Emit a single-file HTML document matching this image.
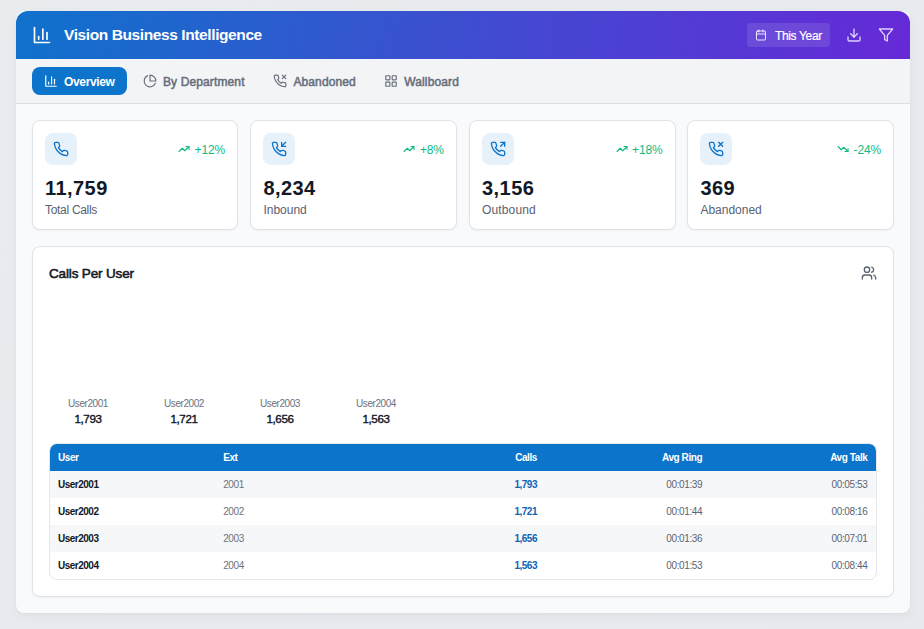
<!DOCTYPE html>
<html lang="en">
<head>
<meta charset="utf-8">
<title>Vision Business Intelligence</title>
<style>
*{box-sizing:border-box;margin:0;padding:0}
html,body{width:924px;height:629px;overflow:hidden}
body{font-family:"Liberation Sans",sans-serif;background:linear-gradient(135deg,#e8ecef 0%,#e6eaee 100%);color:#111827;position:relative}
svg{display:block;fill:none;stroke:currentColor;stroke-width:2;stroke-linecap:round;stroke-linejoin:round}
.app{position:absolute;left:16px;top:11px;width:894px;height:602px;background:#f9fafb;border-radius:8px;box-shadow:0 4px 12px rgba(0,0,0,.035),0 1px 3px rgba(0,0,0,.03)}
.hdr{height:48px;border-radius:12px 12px 0 0;background:linear-gradient(100deg,#0f72cc 0%,#3b50d0 46%,#6629d7 100%);display:flex;align-items:center;padding:0 16px;color:#fff}
.hdr .logo{width:20px;height:20px;margin-top:-1px}
.hdr h1{font-size:15.5px;font-weight:bold;margin-left:12px;letter-spacing:-.4px;white-space:nowrap}
.hdr .sp{flex:1}
.yr{display:flex;align-items:center;width:83px;height:24px;padding:1px 0 0 8px;border-radius:4px;background:rgba(255,255,255,.11);font-size:12px;letter-spacing:-.35px;color:#fff;-webkit-text-stroke:.2px #fff;white-space:nowrap}
.yr svg{width:12px;height:12px;margin-right:8px;margin-top:-2px;color:rgba(255,255,255,.85)}
.ib{width:16px;height:16px;margin-left:16px;color:rgba(255,255,255,.78)}
.tabs{height:45px;background:#f3f4f6;border-bottom:1px solid #dcdfe4;display:flex;align-items:flex-start;padding:8px 16px 0}
.tab{height:28px;display:flex;align-items:center;padding:2px 0 0 12px;border-radius:8px;font-size:12px;letter-spacing:.12px;color:#666e7b;-webkit-text-stroke:.5px currentColor;margin-right:4px;white-space:nowrap}
.tab svg{margin-top:-2px}
.t1{width:95px}.t2{width:126.4px}.t3{width:106.9px}.t4{width:100px}
.tab svg{width:14px;height:14px;margin-right:6px}
.tab.on{background:#0c74ca;color:#fff;font-weight:bold;letter-spacing:-.35px;-webkit-text-stroke:0}
.cards{position:absolute;left:16px;top:109px;width:862px;height:110px}
.card{position:absolute;top:0;width:206.5px;height:110px;background:#fff;border:1px solid #e0e3e7;border-radius:8px;padding:12px;box-shadow:0 1px 2px rgba(0,0,0,.05);}
.c1{left:0;width:206px}.c2{left:218.4px}.c3{left:437px}.c4{left:655.4px;width:206.6px}
.ic{width:32px;height:32px;border-radius:8px;background:#e7f1fa;color:#0c74ca;display:flex;align-items:center;justify-content:center}
.ic svg{width:16px;height:16px}
.tr{position:absolute;right:12px;top:21px;height:16px;display:flex;align-items:center;font-size:12px;letter-spacing:-.15px;color:#10b981;white-space:nowrap}
.tr svg{width:12px;height:12px;margin-right:4.5px;margin-top:-2px;stroke-width:2.2}
.num{position:absolute;left:12px;top:55px;font-size:20px;line-height:24px;font-weight:bold;letter-spacing:.45px;color:#111827;white-space:nowrap}
.lbl{position:absolute;left:12px;top:81px;font-size:12px;line-height:16px;color:#596170;white-space:nowrap}
.panel{position:absolute;left:16px;top:235px;width:862px;height:351px;background:#fff;border:1px solid #e0e3e7;border-radius:8px;box-shadow:0 1px 2px rgba(0,0,0,.05)}
.panel h2{position:absolute;left:16px;top:17px;font-size:13.5px;line-height:20px;font-weight:normal;letter-spacing:-.15px;-webkit-text-stroke:.55px currentColor;color:#111827;white-space:nowrap}
.panel .uic{position:absolute;right:16px;top:18px;width:16px;height:16px;color:#5b6472}
.bars{position:absolute;left:15px;top:150px;display:flex}
.bar{width:80px;margin-right:16px;text-align:center}
.bar .n{font-size:10px;line-height:13px;letter-spacing:-.42px;color:#6b7280}
.bar .v{font-size:11.6px;line-height:16px;letter-spacing:-.4px;-webkit-text-stroke:.4px currentColor;color:#111827;margin-top:1px}
.tbl{position:absolute;left:16px;top:196px;width:828px;height:137px;border:1px solid #e5e7eb;border-radius:8px;overflow:hidden;background:#fff}
table{width:100%;border-collapse:collapse;table-layout:fixed;font-size:10px;letter-spacing:-.38px}
th{height:27px;background:#0c74ca;color:#fff;font-weight:bold;font-size:10px;letter-spacing:-.42px;text-align:left;padding:0 8px;line-height:12px}
td{height:27px;padding:0 8px;line-height:12px;color:#6b7280}
tr:nth-child(even) td{background:#f6f7f9}
td:first-child{color:#111827;font-weight:bold;letter-spacing:-.5px}
.r{text-align:right;padding-right:8.6px !important}
td.c{color:#0c64b4;font-weight:bold;letter-spacing:-.5px}
td.t{color:#5b6472}
</style>
</head>
<body>
<div class="app">
  <div class="hdr">
    <svg class="logo" viewBox="0 0 24 24"><path d="M3 3v18h18"/><path d="M18 17V9"/><path d="M13 17V5"/><path d="M8 17v-3"/></svg>
    <h1>Vision Business Intelligence</h1>
    <div class="sp"></div>
    <div class="yr"><svg viewBox="0 0 24 24"><rect x="3" y="4" width="18" height="18" rx="2"/><path d="M16 2v4"/><path d="M8 2v4"/><path d="M3 10h18"/></svg>This Year</div>
    <svg class="ib" viewBox="0 0 24 24"><path d="M21 15v4a2 2 0 0 1-2 2H5a2 2 0 0 1-2-2v-4"/><path d="M7 10l5 5 5-5"/><path d="M12 15V3"/></svg>
    <svg class="ib" viewBox="0 0 24 24"><path d="M22 3H2l8 9.46V19l4 2v-8.54L22 3z"/></svg>
  </div>
  <div class="tabs">
    <div class="tab on t1"><svg viewBox="0 0 24 24"><path d="M3 3v18h18"/><path d="M18 17V9"/><path d="M13 17V5"/><path d="M8 17v-3"/></svg>Overview</div>
    <div class="tab t2"><svg viewBox="0 0 24 24"><path d="M21.21 15.89A10 10 0 1 1 8 2.83"/><path d="M22 12A10 10 0 0 0 12 2v10z"/></svg>By Department</div>
    <div class="tab t3"><svg viewBox="0 0 24 24"><path d="M22 2l-6 6"/><path d="M16 2l6 6"/><path d="M22 16.92v3a2 2 0 0 1-2.18 2 19.79 19.79 0 0 1-8.63-3.07 19.5 19.5 0 0 1-6-6 19.79 19.79 0 0 1-3.07-8.67A2 2 0 0 1 4.11 2h3a2 2 0 0 1 2 1.72 12.84 12.84 0 0 0 .7 2.81 2 2 0 0 1-.45 2.11L8.09 9.91a16 16 0 0 0 6 6l1.27-1.27a2 2 0 0 1 2.11-.45 12.84 12.84 0 0 0 2.81.7A2 2 0 0 1 22 16.92z"/></svg>Abandoned</div>
    <div class="tab t4"><svg viewBox="0 0 24 24"><rect x="3" y="3" width="7" height="7" rx="1"/><rect x="14" y="3" width="7" height="7" rx="1"/><rect x="14" y="14" width="7" height="7" rx="1"/><rect x="3" y="14" width="7" height="7" rx="1"/></svg>Wallboard</div>
  </div>
  <div class="cards">
    <div class="card c1">
      <div class="ic"><svg viewBox="0 0 24 24"><path d="M22 16.92v3a2 2 0 0 1-2.18 2 19.79 19.79 0 0 1-8.63-3.07 19.5 19.5 0 0 1-6-6 19.79 19.79 0 0 1-3.07-8.67A2 2 0 0 1 4.11 2h3a2 2 0 0 1 2 1.72 12.84 12.84 0 0 0 .7 2.81 2 2 0 0 1-.45 2.11L8.09 9.91a16 16 0 0 0 6 6l1.27-1.27a2 2 0 0 1 2.11-.45 12.84 12.84 0 0 0 2.81.7A2 2 0 0 1 22 16.92z"/></svg></div>
      <div class="tr"><svg viewBox="0 0 24 24"><path d="M22 7l-8.5 8.5-5-5L2 17"/><path d="M16 7h6v6"/></svg>+12%</div>
      <div class="num">11,759</div>
      <div class="lbl" style="letter-spacing:-.3px">Total Calls</div>
    </div>
    <div class="card c2">
      <div class="ic"><svg viewBox="0 0 24 24"><path d="M16 2v6h6"/><path d="M22 2l-6 6"/><path d="M22 16.92v3a2 2 0 0 1-2.18 2 19.79 19.79 0 0 1-8.63-3.07 19.5 19.5 0 0 1-6-6 19.79 19.79 0 0 1-3.07-8.67A2 2 0 0 1 4.11 2h3a2 2 0 0 1 2 1.72 12.84 12.84 0 0 0 .7 2.81 2 2 0 0 1-.45 2.11L8.09 9.91a16 16 0 0 0 6 6l1.27-1.27a2 2 0 0 1 2.11-.45 12.84 12.84 0 0 0 2.81.7A2 2 0 0 1 22 16.92z"/></svg></div>
      <div class="tr"><svg viewBox="0 0 24 24"><path d="M22 7l-8.5 8.5-5-5L2 17"/><path d="M16 7h6v6"/></svg>+8%</div>
      <div class="num">8,234</div>
      <div class="lbl">Inbound</div>
    </div>
    <div class="card c3">
      <div class="ic"><svg viewBox="0 0 24 24"><path d="M22 8V2h-6"/><path d="M16 8l6-6"/><path d="M22 16.92v3a2 2 0 0 1-2.18 2 19.79 19.79 0 0 1-8.63-3.07 19.5 19.5 0 0 1-6-6 19.79 19.79 0 0 1-3.07-8.67A2 2 0 0 1 4.11 2h3a2 2 0 0 1 2 1.72 12.84 12.84 0 0 0 .7 2.81 2 2 0 0 1-.45 2.11L8.09 9.91a16 16 0 0 0 6 6l1.27-1.27a2 2 0 0 1 2.11-.45 12.84 12.84 0 0 0 2.81.7A2 2 0 0 1 22 16.92z"/></svg></div>
      <div class="tr"><svg viewBox="0 0 24 24"><path d="M22 7l-8.5 8.5-5-5L2 17"/><path d="M16 7h6v6"/></svg>+18%</div>
      <div class="num">3,156</div>
      <div class="lbl" style="letter-spacing:.15px">Outbound</div>
    </div>
    <div class="card c4">
      <div class="ic"><svg viewBox="0 0 24 24"><path d="M22 2l-6 6"/><path d="M16 2l6 6"/><path d="M22 16.92v3a2 2 0 0 1-2.18 2 19.79 19.79 0 0 1-8.63-3.07 19.5 19.5 0 0 1-6-6 19.79 19.79 0 0 1-3.07-8.67A2 2 0 0 1 4.11 2h3a2 2 0 0 1 2 1.72 12.84 12.84 0 0 0 .7 2.81 2 2 0 0 1-.45 2.11L8.09 9.91a16 16 0 0 0 6 6l1.27-1.27a2 2 0 0 1 2.11-.45 12.84 12.84 0 0 0 2.81.7A2 2 0 0 1 22 16.92z"/></svg></div>
      <div class="tr"><svg viewBox="0 0 24 24"><path d="M22 17l-8.5-8.5-5 5L2 7"/><path d="M16 17h6v-6"/></svg>-24%</div>
      <div class="num">369</div>
      <div class="lbl">Abandoned</div>
    </div>
  </div>
  <div class="panel">
    <h2>Calls Per User</h2>
    <svg class="uic" viewBox="0 0 24 24"><path d="M16 21v-2a4 4 0 0 0-4-4H6a4 4 0 0 0-4 4v2"/><circle cx="9" cy="7" r="4"/><path d="M22 21v-2a4 4 0 0 0-3-3.87"/><path d="M16 3.13a4 4 0 0 1 0 7.75"/></svg>
    <div class="bars">
      <div class="bar"><div class="n">User2001</div><div class="v">1,793</div></div>
      <div class="bar"><div class="n">User2002</div><div class="v">1,721</div></div>
      <div class="bar"><div class="n">User2003</div><div class="v">1,656</div></div>
      <div class="bar"><div class="n">User2004</div><div class="v">1,563</div></div>
    </div>
    <div class="tbl">
      <table>
        <tr><th>User</th><th>Ext</th><th class="r">Calls</th><th class="r">Avg Ring</th><th class="r">Avg Talk</th></tr>
        <tr><td>User2001</td><td>2001</td><td class="r c">1,793</td><td class="r t">00:01:39</td><td class="r t">00:05:53</td></tr>
        <tr><td>User2002</td><td>2002</td><td class="r c">1,721</td><td class="r t">00:01:44</td><td class="r t">00:08:16</td></tr>
        <tr><td>User2003</td><td>2003</td><td class="r c">1,656</td><td class="r t">00:01:36</td><td class="r t">00:07:01</td></tr>
        <tr><td>User2004</td><td>2004</td><td class="r c">1,563</td><td class="r t">00:01:53</td><td class="r t">00:08:44</td></tr>
      </table>
    </div>
  </div>
</div>
</body>
</html>
